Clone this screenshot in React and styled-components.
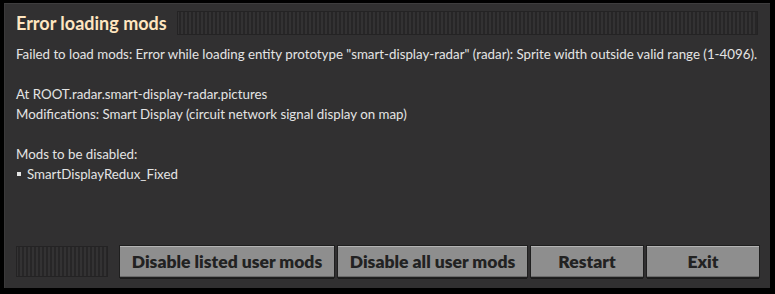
import React from 'react'
import styled, {createGlobalStyle} from 'styled-components'

const GlobalStyle = createGlobalStyle`
  html, body {
    margin: 0;
    padding: 0;
    background: #000;
  }
`

const Screen = styled.div`
  width: 775px;
  height: 294px;
  box-sizing: border-box;
  padding: 3px 5px 6px 4px;
  background: #000;
`

const Frame = styled.div`
  height: 100%;
  box-sizing: border-box;
  display: flex;
  flex-direction: column;
  padding: 8px 10px 9px 12px;
  background: #313031;
  box-shadow: inset 0 1px 0 #3e3d3e, inset 1px 0 0 #3a393a;
  font-family: Lato, "Liberation Sans", sans-serif;
`

const TitleBar = styled.div`
  display: flex;
  align-items: center;
  gap: 10px;
  height: 24px;
`

const Title = styled.h1`
  margin: 0;
  font-size: 18px;
  font-weight: 700;
  color: #ffe6c0;
  white-space: nowrap;
`

const Stripes = styled.div`
  flex: ${p => (p.$grow ? 1 : 'none')};
  width: ${p => (p.$grow ? 'auto' : `${p.$width}px`)};
  height: ${p => p.$height}px;
  margin-right: ${p => (p.$grow ? 2 : 0)}px;
  background-color: #272627;
  background-image: repeating-linear-gradient(
    90deg,
    #333233 0px,
    #333233 2px,
    #272627 2px,
    #272627 4px
  );
  box-shadow: inset 0 0 0 1px #242324;
`

const Message = styled.div`
  margin-top: 9px;
  flex: 1;
  color: #e4e4e4;
  font-size: 13.3px;
  line-height: 20px;
`

const Para = styled.p`
  margin: 0 0 20px 0;
`

const Line = styled.div`
  white-space: nowrap;
`

const Bullet = styled.span`
  display: inline-block;
  width: 4px;
  height: 4px;
  margin: 0 6px 3px 1px;
  background: #e4e4e4;
  vertical-align: middle;
`

const Footer = styled.div`
  display: flex;
  align-items: stretch;
  height: 31px;
  margin-bottom: 2px;
`

const Buttons = styled.div`
  display: flex;
  gap: 4px;
  margin-left: 12px;
  flex: 1;
`

const Button = styled.button`
  width: ${p => p.$width}px;
  height: 31px;
  padding: 0;
  border: none;
  background: #8e8e8e;
  box-shadow: inset 0 1px 0 #b4b4b4, inset 0 -1px 0 #6a6a6a,
    0 0 0 1px #1f1f1f, 0 2px 0 #1a1a1a;
  color: #222;
  font-family: Lato, "Liberation Sans", sans-serif;
  font-size: 17.5px;
  font-weight: 800;
  cursor: pointer;
`

export default function App() {
  return (
    <>
      <GlobalStyle />
      <Screen>
        <Frame>
          <TitleBar>
            <Title>Error loading mods</Title>
            <Stripes $grow $height={24} />
          </TitleBar>
          <Message>
            <Para>
              <Line>
                Failed to load mods: Error while loading entity prototype
                "smart-display-radar" (radar): Sprite width outside valid range
                (1-4096).
              </Line>
            </Para>
            <Para>
              <Line>At ROOT.radar.smart-display-radar.pictures</Line>
              <Line>
                Modifications: Smart Display (circuit network signal display on
                map)
              </Line>
            </Para>
            <Para>
              <Line>Mods to be disabled:</Line>
              <Line>
                <Bullet />
                SmartDisplayRedux_Fixed
              </Line>
            </Para>
          </Message>
          <Footer>
            <Stripes $width={92} $height={31} />
            <Buttons>
              <Button $width={214}>Disable listed user mods</Button>
              <Button $width={189}>Disable all user mods</Button>
              <Button $width={112}>Restart</Button>
              <Button $width={112}>Exit</Button>
            </Buttons>
          </Footer>
        </Frame>
      </Screen>
    </>
  )
}
